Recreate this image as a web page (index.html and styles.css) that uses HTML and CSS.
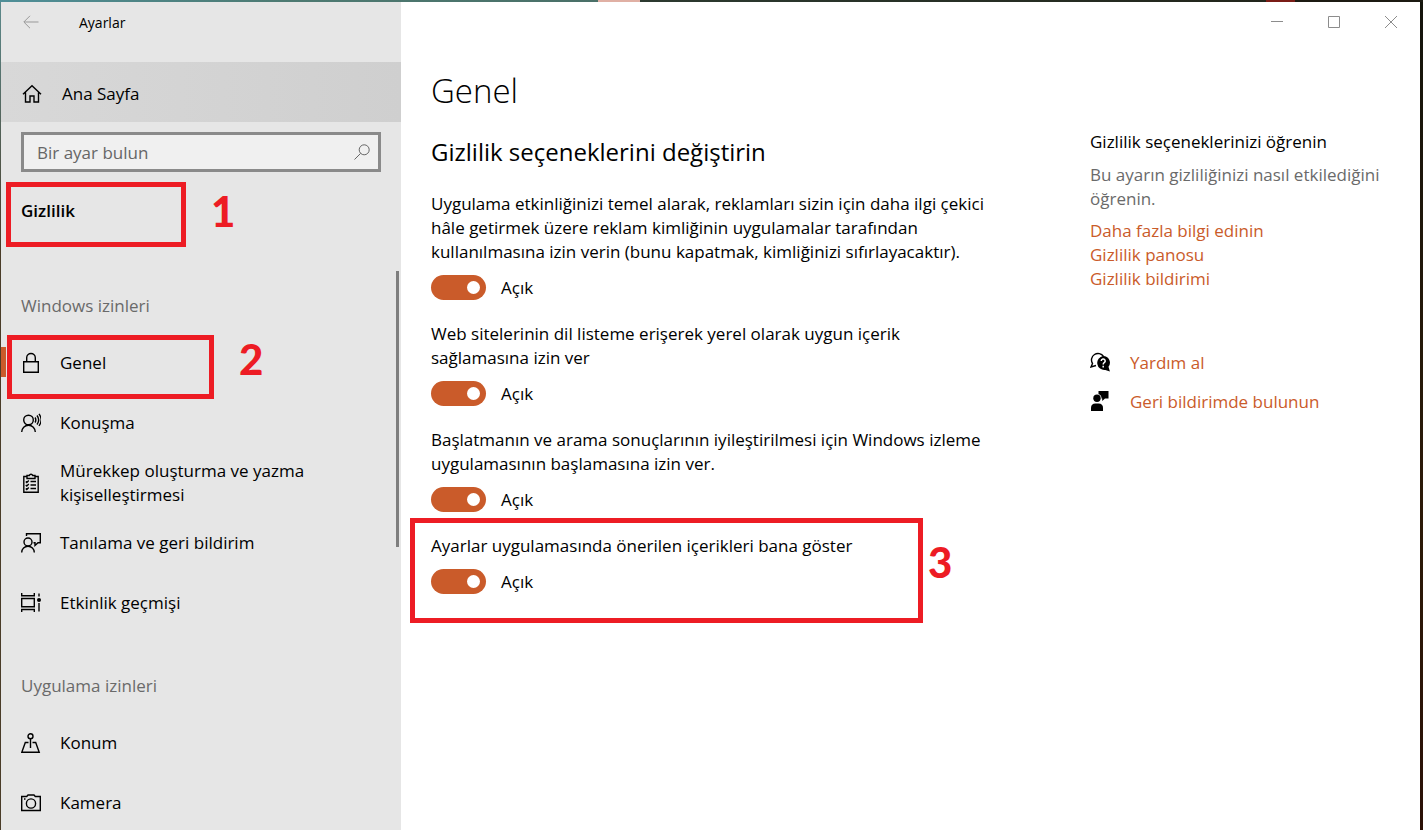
FILE: index.html
```html
<!DOCTYPE html>
<html lang="tr">
<head>
  <meta charset="UTF-8">
  <meta name="viewport" content="width=device-width, initial-scale=1.0">
  <title>Ayarlar</title>
  <link rel="stylesheet" href="styles.css">
</head>
<body>
  <div class="window">
    <aside class="sidebar">
      <div class="titlebar">
        <button class="back" type="button" aria-label="Geri">
          <svg width="16" height="14" viewBox="0 0 16 14"><path d="M15.500 7H1M7 .8L.8 7 7 13.200"/></svg>
        </button>
        <span class="app-name">Ayarlar</span>
      </div>

      <a class="home" href="#">
        <svg class="icon" width="20" height="20" viewBox="0 0 20 20"><path d="M1 10.300L10 1.800l9 8.500M3.500 8.500V18H8v-6h4v6h4.500V8.500"/></svg>
        Ana Sayfa
      </a>

      <div class="search">
        <input type="text" placeholder="Bir ayar bulun" aria-label="Bir ayar bulun">
        <svg class="search-icon" width="16" height="16" viewBox="0 0 16 16"><circle cx="10.200" cy="5.800" r="5"/><path d="M6.600 9.400L.5 15.500"/></svg>
      </div>

      <h2 class="category">Gizlilik
        <span class="mark mark-category"><b class="step">1</b></span>
      </h2>

      <nav class="menu">
        <h3>Windows izinleri</h3>
        <a class="active" href="#">
          <svg class="icon" width="20" height="22" viewBox="0 0 20 22"><path d="M2.700 9.700h14.600v10.600H2.700zM5.700 9.700V5.800a4.300 4.300 0 0 1 8.600 0v3.900"/></svg>
          Genel
          <span class="mark mark-menu"><b class="step">2</b></span>
        </a>
        <a href="#">
          <svg class="icon" width="20" height="20" viewBox="0 0 20 20"><circle cx="7.500" cy="7" r="4.800"/><path d="M.7 19a6.800 6.800 0 0 1 13.600 0M14 4.500a4.500 4.500 0 0 1 0 5M16 2.500a7.500 7.500 0 0 1 0 9M18 .8a10 10 0 0 1 0 12"/></svg>
          Konuşma
        </a>
        <a href="#">
          <svg class="icon" width="20" height="20" viewBox="0 0 20 20"><path d="M6 3.500H2.800v15.700h14.400V3.500H14M6 5.500v-3h2.300a1.800 1.800 0 0 1 3.400 0H14v3zM9.500 8.500H15M9.500 12H15M9.500 15.500H15M4.800 8.500l1 1L7.800 7.500M4.800 12l1 1 2-2M4.800 15.500l1 1 2-2"/></svg>
          Mürekkep oluşturma ve yazma kişiselleştirmesi
        </a>
        <a href="#">
          <svg class="icon" width="20" height="20" viewBox="0 0 20 20"><circle cx="7" cy="9" r="4"/><path d="M.7 19.500a6.300 6.300 0 0 1 12.600 0M5.500 3V.7h13.800v9H17l-3 2.800V9.700h-1.500"/></svg>
          Tanılama ve geri bildirim
        </a>
        <a href="#">
          <svg class="icon" width="20" height="20" viewBox="0 0 20 20"><path d="M.7 0v2.800h12.600V0M.7 5.500h12.600v8.300H.7zM.7 19v-2.500h12.600V19M18 .5v3M18 10v8.500"/><circle class="solid" cx="18" cy="7" r="2"/></svg>
          Etkinlik geçmişi
        </a>
        <h3>Uygulama izinleri</h3>
        <a href="#">
          <svg class="icon" width="20" height="20" viewBox="0 0 20 20"><circle cx="9.500" cy="3.200" r="2.500"/><path d="M9.500 5.700V15M7.500 9.500H4.300L.8 19.300h17.400L14.700 9.500h-3.200"/></svg>
          Konum
        </a>
        <a href="#">
          <svg class="icon" width="20" height="20" viewBox="0 0 20 20"><path d="M.7 3.500h5L7 2h6l1.300 1.500h5v14H.7zM3 6h1.500"/><circle cx="10" cy="10.500" r="4.600"/></svg>
          Kamera
        </a>
        <span class="scrollbar"></span>
      </nav>
    </aside>

    <div class="content">
      <div class="window-buttons">
        <button type="button" aria-label="Simge durumuna küçült"><svg width="12" height="12" viewBox="0 0 12 12"><path d="M0 5.500h12"/></svg></button>
        <button type="button" aria-label="Ekranı kapla"><svg width="12" height="12" viewBox="0 0 12 12"><path d="M.5.5h11v11H.5z"/></svg></button>
        <button type="button" aria-label="Kapat"><svg width="12" height="12" viewBox="0 0 12 12"><path d="M0 0l12 12M12 0L0 12"/></svg></button>
      </div>

      <div class="columns">
        <main class="settings">
          <h1>Genel</h1>
          <h2>Gizlilik seçeneklerini değiştirin</h2>

          <div class="setting">
            <p id="ads">Uygulama etkinliğinizi temel alarak, reklamları sizin için daha ilgi çekici hâle getirmek üzere reklam kimliğinin uygulamalar tarafından kullanılmasına izin verin (bunu kapatmak, kimliğinizi sıfırlayacaktır).</p>
            <label class="switch"><input type="checkbox" aria-describedby="ads" checked>Açık</label>
          </div>
          <div class="setting">
            <p id="lang">Web sitelerinin dil listeme erişerek yerel olarak uygun içerik sağlamasına izin ver</p>
            <label class="switch"><input type="checkbox" aria-describedby="lang" checked>Açık</label>
          </div>
          <div class="setting">
            <p id="track">Başlatmanın ve arama sonuçlarının iyileştirilmesi için Windows izleme uygulamasının başlamasına izin ver.</p>
            <label class="switch"><input type="checkbox" aria-describedby="track" checked>Açık</label>
          </div>
          <div class="setting">
            <p id="suggest">Ayarlar uygulamasında önerilen içerikleri bana göster</p>
            <label class="switch"><input type="checkbox" aria-describedby="suggest" checked>Açık</label>
            <span class="mark mark-setting"><b class="step">3</b></span>
          </div>
        </main>

        <aside class="help">
          <h4>Gizlilik seçeneklerinizi öğrenin</h4>
          <p>Bu ayarın gizliliğinizi nasıl etkilediğini öğrenin.</p>
          <a href="#">Daha fazla bilgi edinin</a>
          <a href="#">Gizlilik panosu</a>
          <a href="#">Gizlilik bildirimi</a>

          <div class="support">
            <a href="#">
              <svg width="20" height="22" viewBox="0 0 20 22"><path class="line" d="M6 13.500L1 15l1.500-3.500A6.300 6.300 0 1 1 13.500 4.500"/><path d="M13.200 4a6.700 6.700 0 0 1 5.300 10.800l1.400 4.700-4.600-1.600A7 7 0 1 1 13.200 4z"/><path class="question" d="M11.200 9a2 2 0 1 1 3 1.700q-1 .6-1 1.900M13.200 13.800v1.700"/></svg>
              Yardım al
            </a>
            <a href="#">
              <svg width="20" height="22" viewBox="0 0 20 22"><path d="M8.500 0H18.500v7.500H15L12.200 10V7.500H11.500A4.500 4.500 0 0 0 8.500 3z"/><circle cx="7" cy="7.300" r="3.700"/><path d="M1 20v-3q0-4.500 4.500-4.500h3q4.500 0 4.500 4.500v3z"/></svg>
              Geri bildirimde bulunun
            </a>
          </div>
        </aside>
      </div>
    </div>
  </div>
</body>
</html>
```

FILE: styles.css
```css
* {
  box-sizing: border-box;
}
body {
  margin: 0;
  height: 100vh;
  padding: 2px 3px 0 1px;
  overflow: hidden;
  /* desktop behind the window */
  background:
    linear-gradient(to right, #4f8f98, #4d7a72 20%, #4a7068 42%, #e0b0a4 42% 45%, #2c3a30 45%, #22251b 89%, #7a1c16 89% 91%, #1c1a12 91%) top / 100% 2px no-repeat,
    linear-gradient(to bottom, #5c8a8c, #4a3c28 30%) left / 1px 100% no-repeat,
    linear-gradient(to bottom, #14140c, #2c1a08 60%, #2a1006);
  font-family: "Open Sans", "Noto Sans", sans-serif;
  font-size: 17px;
  line-height: 24px;
  color: #000;
}
h1, h2, h3, h4, p {
  margin: 0;
  font-weight: normal;
}
a {
  color: inherit;
  text-decoration: none;
}
button {
  display: flex;
  align-items: center;
  justify-content: center;
  padding: 0;
  border: none;
  background: none;
}
svg {
  flex: none;
  fill: none;
  stroke: #000;
}
.window {
  display: flex;
  height: 100%;
  background: #fff;
}

/* left side */
.sidebar {
  flex: 0 0 400px;
  background: #e6e6e6;
}
.titlebar {
  display: flex;
  align-items: flex-start;
  height: 60px;
}
.back {
  width: 60px;
  height: 40px;
}
.back svg {
  stroke: #999;
}
.app-name {
  padding: 9px 18px;
  font-size: 14px;
}
.home {
  display: flex;
  align-items: center;
  gap: 20px;
  height: 60px;
  padding: 3px 21px 0;
  background: linear-gradient(to right, #d8d8d8, #cfcfcf);
}
.icon {
  stroke-width: 1.4;
}
.search {
  position: relative;
  margin: 10px 20px;
}
.search input {
  width: 100%;
  height: 40px;
  padding: 0 40px 0 13px;
  border: 3px solid #8a8a8a;
  background: #f0f0f0;
  font: inherit;
}
.search input::placeholder {
  color: #666;
  opacity: 1;
}
.search-icon {
  position: absolute;
  right: 11px;
  top: 12px;
  stroke: #666;
}
.category {
  position: relative;
  height: 71px;
  padding: 17px 20px;
  font-size: 17px;
  font-weight: 600;
}
.menu {
  position: relative;
}
.menu h3 {
  height: 80px;
  padding: 41px 20px 0;
  font-size: 17px;
  color: #6a6a6a;
}
.menu a {
  position: relative;
  display: flex;
  align-items: center;
  gap: 19px;
  height: 60px;
  padding: 0 80px 0 20px;
}
.menu .active::before {
  content: "";
  position: absolute;
  left: 0;
  top: 14px;
  width: 5px;
  height: 30px;
  background: #ca5b2a;
}
.menu .solid {
  fill: #000;
  stroke: none;
}
.scrollbar {
  position: absolute;
  right: 2px;
  top: 18px;
  width: 3px;
  height: 276px;
  background: #7e7e7e;
}

/* right side */
.content {
  flex: 1;
  min-width: 0;
}
.window-buttons {
  display: flex;
  justify-content: flex-end;
  padding-right: 1px;
}
.window-buttons button {
  width: 57px;
  height: 40px;
}
.window-buttons svg {
  stroke: #8c8c8c;
}
.columns {
  display: flex;
  justify-content: space-between;
  padding: 25px 0 0 30px;
}
.settings {
  flex: 0 1 560px;
}
.settings h1 {
  font-size: 33px;
  font-weight: 300;
  line-height: 48px;
}
.settings h2 {
  margin: 21px 0 24px;
  font-size: 24px;
  line-height: 32px;
}
.setting {
  position: relative;
  margin-bottom: 22px;
}
.switch {
  display: flex;
  align-items: center;
  gap: 15px;
  height: 25px;
  margin-top: 11px;
}
.switch input {
  appearance: none;
  display: flex;
  align-items: center;
  width: 55px;
  height: 25px;
  margin: 0;
  padding: 0 6px;
  border-radius: 13px;
  background: #777;
}
.switch input::before {
  content: "";
  width: 13px;
  height: 13px;
  border-radius: 50%;
  background: #fff;
}
.switch input:checked {
  justify-content: flex-end;
  background: #ca5b2a;
}
.help {
  flex: 0 0 330px;
  padding: 63px 20px 0 0;
}
.help h4 {
  font-size: 17px;
}
.help p {
  margin: 9px 0 8px;
  color: #6a6a6a;
}
.help a {
  display: block;
  color: #ca5b2a;
}
.support {
  display: grid;
  gap: 15px;
  margin-top: 60px;
}
.support a {
  display: flex;
  align-items: center;
  gap: 20px;
}
.support svg {
  fill: #000;
  stroke: none;
}
.support .line {
  fill: none;
  stroke: #000;
  stroke-width: 1.4;
}
.support .question {
  fill: none;
  stroke: #fff;
  stroke-width: 1.5;
}

/* numbered red frames */
.mark {
  position: absolute;
  border: 5px solid #ed1c24;
  pointer-events: none;
}
.step {
  position: absolute;
  left: 100%;
  font-family: Lato, "Open Sans", sans-serif;
  font-size: 42px;
  font-weight: 900;
  line-height: 48px;
  color: #ed1c24;
}
.mark-category {
  left: 5px;
  top: 0;
  width: 180px;
  height: 65px;
}
.mark-category .step {
  margin-left: 30px;
}
.mark-menu {
  left: 6px;
  top: 2px;
  width: 207px;
  height: 64px;
}
.mark-menu .step {
  top: -5px;
  margin-left: 30px;
}
.mark-setting {
  left: -21px;
  top: -16px;
  width: 513px;
  height: 105px;
}
.mark-setting .step {
  top: 15px;
  margin-left: 10px;
}
```
